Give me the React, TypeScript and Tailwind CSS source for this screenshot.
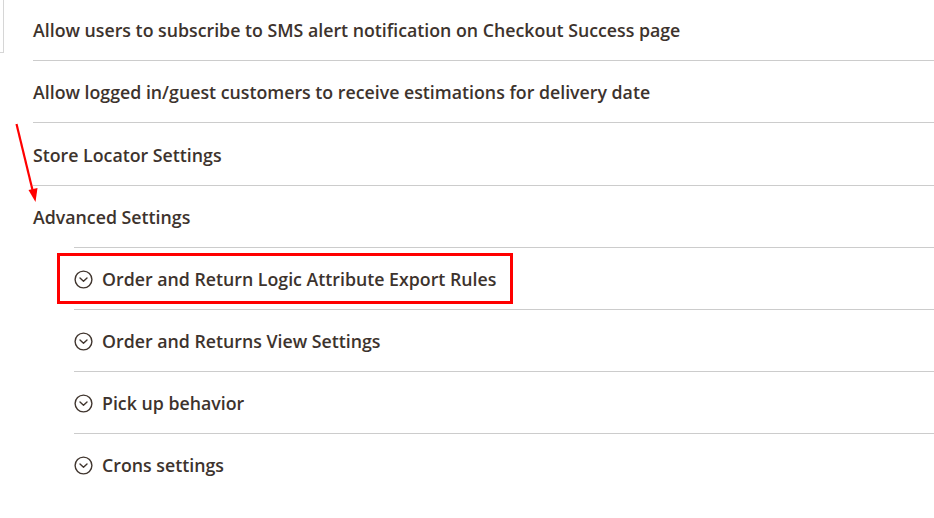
import React from "react";

const font = { fontFamily: '"Open Sans", "Liberation Sans", sans-serif' };

function Chevron() {
  return (
    <svg width="19" height="19" viewBox="0 0 19 19" className="shrink-0 mt-[1px]">
      <circle cx="9.5" cy="9.5" r="8.4" fill="none" stroke="#41362f" strokeWidth="1.4" />
      <path d="M6 8 L9.5 11.3 L13 8" fill="none" stroke="#41362f" strokeWidth="1.4" strokeLinecap="round" strokeLinejoin="round" />
    </svg>
  );
}

export default function App() {
  const top = [
    "Allow users to subscribe to SMS alert notification on Checkout Success page",
    "Allow logged in/guest customers to receive estimations for delivery date",
    "Store Locator Settings",
  ];
  const nested = [
    "Order and Return Logic Attribute Export Rules",
    "Order and Returns View Settings",
    "Pick up behavior",
    "Crons settings",
  ];
  return (
    <div className="relative w-[934px] h-[518px] overflow-hidden bg-white" style={font}>
      <div className="absolute left-0 top-0 w-[4px] h-[53px] border-r border-b border-[#d6d6d6]" />
      <div className="pl-[33px] mt-[-1px]">
        {top.map((t, i) => (
          <div key={t} className={`${i === 2 ? "h-[63px]" : "h-[62px]"} pt-[2px] border-b border-[#cccccc] flex items-center text-[17.75px] font-semibold text-[#3d332d]`}>
            {t}
          </div>
        ))}
        <div className="h-[61px] pt-[2px] flex items-center text-[17.75px] font-semibold text-[#3d332d]">Advanced Settings</div>
        <div className="pl-[41px]">
          {nested.map((t) => (
            <div key={t} className="h-[62px] pt-[1px] border-t border-[#cccccc] flex items-center gap-[9px] text-[17.75px] font-semibold text-[#3d332d]">
              <Chevron />
              <span>{t}</span>
            </div>
          ))}
        </div>
      </div>
      <div className="absolute left-[57px] top-[253px] w-[456px] h-[51px] border-[3px] border-[#ff0000]" />
      <svg className="absolute left-0 top-0" width="60" height="220" viewBox="0 0 60 220">
        <line x1="16.5" y1="124" x2="33" y2="192" stroke="#ff0000" strokeWidth="2.2" />
        <polygon points="28.5,190 37.5,188 35.5,202" fill="#ff0000" />
      </svg>
    </div>
  );
}
